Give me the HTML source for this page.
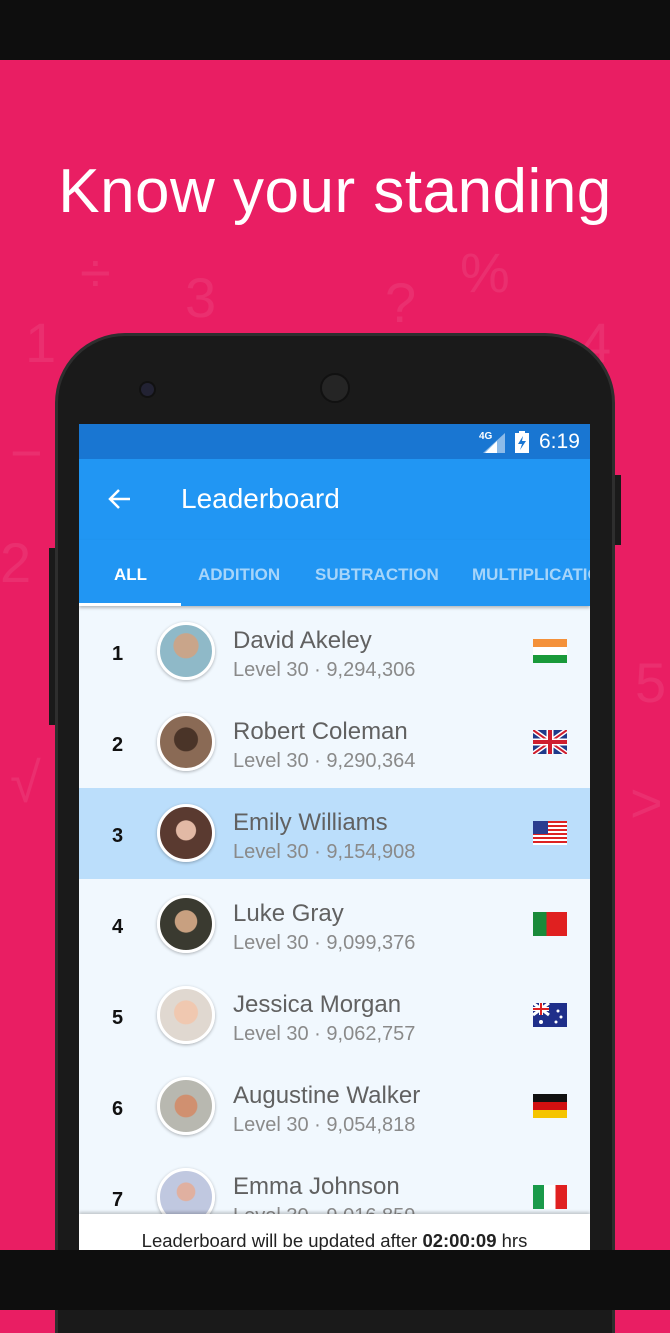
<!DOCTYPE html>
<html><head><style>
*{margin:0;padding:0;box-sizing:border-box}
body{width:670px;height:1310px;background:#E91E63;position:relative;overflow:hidden;font-family:"Liberation Sans",sans-serif}
.bar{position:absolute;left:0;width:670px;background:#0e0e0e}
.sym{position:absolute;color:rgba(255,255,255,0.08);font-size:56px;font-family:"Liberation Sans",sans-serif}
h1{position:absolute;top:156px;left:0;width:670px;text-align:center;color:#fff;font-weight:normal;font-size:62px;letter-spacing:0.5px}
.phone{position:absolute;left:55px;top:333px;width:560px;height:1000px;background:#1a1a1a;border-radius:70px 70px 0 0;border:3px solid #2e2e2e;border-bottom:none}
.btn{position:absolute;background:#1a1a1a}
.screen{position:absolute;left:79px;top:424px;width:511px;height:826px;background:#F1F8FE;overflow:hidden}
.status{height:35px;background:#1976D2;color:#fff;position:relative}
.tool{height:81px;background:#2196F3;position:relative;color:#fff}
.tabs{height:66px;background:#2196F3;position:relative;box-shadow:0 2px 3px rgba(0,0,0,.25)}
.tab{position:absolute;top:25px;font-size:17px;font-weight:bold;color:rgba(255,255,255,.6);white-space:nowrap}
.row{position:absolute;left:0;width:511px;height:91px}
.rk{position:absolute;left:33px;top:37px;font-size:20px;font-weight:bold;color:#111}
.av{position:absolute;left:78px;top:16px;width:58px;height:58px;border-radius:50%;border:3px solid #fff;box-shadow:0 1px 3px rgba(0,0,0,.3)}
.nm{position:absolute;left:154px;top:21px;font-size:24px;color:#616161}
.sb{position:absolute;left:154px;top:53px;font-size:20px;color:#8a8a8a}
.fl{position:absolute;left:454px;top:33px;width:34px;height:24px;overflow:hidden}
.foot{position:absolute;left:0;top:790px;width:511px;height:40px;background:#fff;box-shadow:0 -2px 3px rgba(0,0,0,.2);text-align:center;font-size:18.5px;color:#222;padding-top:16px;white-space:nowrap}
</style></head><body>
<div class="bar" style="top:0;height:60px"></div>
<div class="sym" style="left:80px;top:240px">÷</div>
<div class="sym" style="left:185px;top:265px">3</div>
<div class="sym" style="left:385px;top:270px">?</div>
<div class="sym" style="left:460px;top:240px">%</div>
<div class="sym" style="left:25px;top:310px">1</div>
<div class="sym" style="left:580px;top:310px">4</div>
<div class="sym" style="left:10px;top:420px">−</div>
<div class="sym" style="left:0px;top:530px">2</div>
<div class="sym" style="left:635px;top:650px">5</div>
<div class="sym" style="left:10px;top:750px">√</div>
<div class="sym" style="left:630px;top:770px">&gt;</div>
<h1>Know your standing</h1>
<div class="btn" style="left:49px;top:548px;width:8px;height:177px"></div>
<div class="btn" style="left:613px;top:475px;width:8px;height:70px"></div>
<div class="phone"></div>
<div style="position:absolute;left:141px;top:383px;width:13px;height:13px;border-radius:50%;background:#223;box-shadow:0 0 0 2px #111"></div>
<div style="position:absolute;left:320px;top:373px;width:30px;height:30px;border-radius:50%;background:#252525;border:2px solid #111"></div>
<div class="screen">
 <div class="status">
  <span style="position:absolute;left:400px;top:7px;font-size:10px;font-weight:bold">4G</span>
  <svg style="position:absolute;left:404px;top:9px" width="22" height="20"><polygon points="22,0 22,20 0,20" fill="rgba(255,255,255,.5)"/><polygon points="14,8 14,20 2,20" fill="#fff"/></svg>
  <svg style="position:absolute;left:436px;top:7px" width="14" height="22"><rect x="4" y="0" width="6" height="3" fill="#fff"/><rect x="0" y="2" width="14" height="20" fill="#fff"/><polygon points="8,5 3,13 7,13 5,19 11,10 7,10" fill="#1976D2"/></svg>
  <span style="position:absolute;left:460px;top:6px;font-size:21px">6:19</span>
 </div>
 <div class="tool">
  <svg style="position:absolute;left:28px;top:29px" width="24" height="22"><path d="M23 11H3M12 2L3 11l9 9" stroke="#fff" stroke-width="2.5" fill="none"/></svg>
  <span style="position:absolute;left:102px;top:24px;font-size:28px">Leaderboard</span>
 </div>
 <div class="tabs">
  <span class="tab" style="left:35px;color:#fff">ALL</span>
  <span class="tab" style="left:119px">ADDITION</span>
  <span class="tab" style="left:236px">SUBTRACTION</span>
  <span class="tab" style="left:393px">MULTIPLICATION</span>
  <div style="position:absolute;left:0;bottom:0;width:102px;height:3px;background:#fff"></div>
 </div>
 <div style="position:relative">
 <div class="row" style="top:0"><span class="rk">1</span><div class="av" style="background:radial-gradient(circle at 50% 40%,#c9a58a 0 30%,#8fb9c8 32%)"></div><span class="nm">David Akeley</span><span class="sb">Level 30 · 9,294,306</span><div class="fl" style="background:linear-gradient(#f4913a 33%,#fff 33% 66%,#1a9a3a 66%)"></div></div>
 <div class="row" style="top:91px"><span class="rk">2</span><div class="av" style="background:radial-gradient(circle at 50% 45%,#4a3428 0 30%,#8a6a55 32%)"></div><span class="nm">Robert Coleman</span><span class="sb">Level 30 · 9,290,364</span><div class="fl" style="background:#1f3a8a"><svg width="34" height="24"><path d="M0 0L34 24M34 0L0 24" stroke="#fff" stroke-width="5"/><path d="M0 0L34 24M34 0L0 24" stroke="#cf1e2e" stroke-width="2"/><path d="M17 0V24M0 12H34" stroke="#fff" stroke-width="7"/><path d="M17 0V24M0 12H34" stroke="#cf1e2e" stroke-width="4"/></svg></div></div>
 <div class="row" style="top:182px;background:#BBDEFB"><span class="rk">3</span><div class="av" style="background:radial-gradient(circle at 50% 45%,#e2b9a5 0 25%,#5a3a30 27%)"></div><span class="nm">Emily Williams</span><span class="sb">Level 30 · 9,154,908</span><div class="fl" style="background:repeating-linear-gradient(#d22 0 2px,#fff 2px 4px)"><div style="width:15px;height:13px;background:#2a3d8f"></div></div></div>
 <div class="row" style="top:273px"><span class="rk">4</span><div class="av" style="background:radial-gradient(circle at 50% 45%,#c8a080 0 28%,#3a3a30 30%)"></div><span class="nm">Luke Gray</span><span class="sb">Level 30 · 9,099,376</span><div class="fl" style="background:linear-gradient(90deg,#1a8a3a 40%,#e02020 40%)"></div></div>
 <div class="row" style="top:364px"><span class="rk">5</span><div class="av" style="background:radial-gradient(circle at 50% 45%,#f0c8b0 0 30%,#e0d8d0 32%)"></div><span class="nm">Jessica Morgan</span><span class="sb">Level 30 · 9,062,757</span><div class="fl" style="background:#1f2f8a"><svg width="34" height="24"><path d="M0 0L16 12M16 0L0 12" stroke="#fff" stroke-width="3"/><path d="M8 0V12M0 6H16" stroke="#fff" stroke-width="4"/><path d="M8 0V12M0 6H16" stroke="#d22" stroke-width="2"/><circle cx="25" cy="8" r="1.5" fill="#fff"/><circle cx="28" cy="14" r="1.5" fill="#fff"/><circle cx="23" cy="19" r="1.5" fill="#fff"/><circle cx="8" cy="19" r="2" fill="#fff"/></svg></div></div>
 <div class="row" style="top:455px"><span class="rk">6</span><div class="av" style="background:radial-gradient(circle at 50% 50%,#d09070 0 30%,#b8b8b0 32%)"></div><span class="nm">Augustine Walker</span><span class="sb">Level 30 · 9,054,818</span><div class="fl" style="background:linear-gradient(#111 33%,#d01010 33% 66%,#f5c400 66%)"></div></div>
 <div class="row" style="top:546px"><span class="rk">7</span><div class="av" style="background:radial-gradient(circle at 50% 40%,#e0b0a0 0 22%,#c0c8e0 24%)"></div><span class="nm">Emma Johnson</span><span class="sb">Level 30 · 9,016,859</span><div class="fl" style="background:linear-gradient(90deg,#1a9a4a 33%,#fff 33% 66%,#e02020 66%)"></div></div>
 </div>
 <div class="foot">Leaderboard will be updated after <b>02:00:09</b> hrs</div>
</div>
<div class="bar" style="top:1250px;height:60px"></div>
</body></html>
